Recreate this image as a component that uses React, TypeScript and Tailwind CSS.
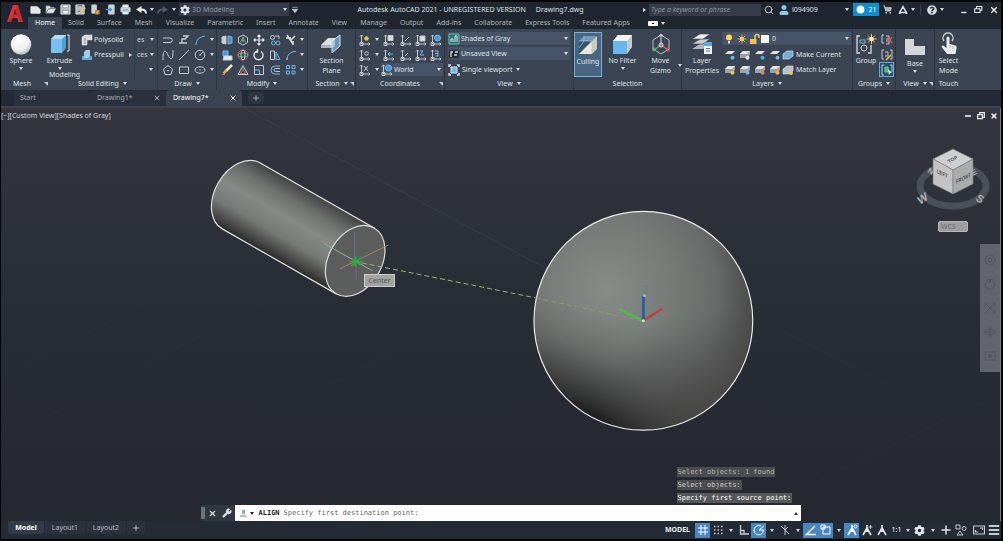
import React from "react";
import { Search, ShoppingCart, X, Minus, Plus, Menu, Wrench, Clock3 } from "lucide-react";
import { FaCog, FaQuestionCircle, FaUser } from "react-icons/fa";

type Kids = { children?: React.ReactNode };

function Ico({ children, className = "h-3 w-3" }: Kids & { className?: string }) {
  return (
    <svg viewBox="0 0 12 12" className={`${className} shrink-0`} fill="none" stroke="#c3cad3" strokeWidth="1" aria-hidden="true">
      {children}
    </svg>
  );
}

function Caret({ className = "w-2" }: { className?: string }) {
  return (
    <span className={`flex shrink-0 items-center justify-center ${className}`}>
      <svg viewBox="0 0 4 3" className="h-[3px] w-1 shrink-0" aria-hidden="true">
        <path d="M0 0h4L2 3z" fill="#d5dae0" />
      </svg>
    </span>
  );
}

function Tool({ label, children, className = "h-[15px] w-[15px]" }: Kids & { label: string; className?: string }) {
  return (
    <button type="button" aria-label={label} title={label} className={`flex shrink-0 items-center justify-center ${className}`}>
      {children}
    </button>
  );
}

function Big({ label, lines, children, caret, className = "" }: Kids & { label: string; lines: string[]; caret?: boolean; className?: string }) {
  return (
    <button type="button" aria-label={label} className={`flex shrink-0 flex-col items-center ${className}`}>
      <span className="flex h-6 items-center justify-center">{children}</span>
      {lines.map((l) => (
        <span key={l} className="h-[10px] whitespace-nowrap leading-[10px]">{l}</span>
      ))}
      {caret && <Caret className="h-1 w-2" />}
    </button>
  );
}

function Panel({ title, children, className, arrow, corner }: Kids & { title: string; className: string; arrow?: boolean; corner?: boolean }) {
  return (
    <section className={`flex shrink-0 flex-col border-r border-[#2c3440] pt-[3px] ${className}`}>
      <div className="flex h-[45px]">{children}</div>
      <footer className="relative flex h-[13px] items-center justify-center leading-[13px]">
        {title}
        {arrow && <Caret className="ml-1 w-1" />}
        {corner && <Corner />}
      </footer>
    </section>
  );
}

function Corner() {
  return (
    <svg viewBox="0 0 4 4" className="absolute right-px top-[5px] h-1 w-1" aria-hidden="true">
      <path d="M0 0h4v4z" fill="#c3cad3" />
    </svg>
  );
}

const blue = "#72b8ea";

function DrawIcons() {
  const rows: [string, React.ReactNode][][] = [
    [
      ["Polyline", <path d="M1 4h7a2 2 0 0 1 0 4.500H1" />],
      ["3D Polyline", <path d="M5 2h5L7 5H4v4H1h8" strokeWidth="1.400" />],
      ["Arc", <path d="M2 11C2 6 5 3 11 2" stroke={blue} />],
    ],
    [
      ["Spline", <path d="M1 11V9C1 0 4 1 6 6S11 12 11 3V1" />],
      ["Line", <path d="M1 11 11 1" />],
      ["Circle", <><circle cx="6" cy="6" r="4.800" /><path d="M6 6l3-3M5 6h2" /></>],
    ],
    [
      ["Polygon", <><path d="m6 1.500 4.500 3.500L9 10.500H3L1.500 5z" /><path d="M5 6.500h2" stroke={blue} /></>],
      ["Rectangle", <path d="M1.500 3h9v6.500h-9z" />],
      ["Ellipse", <><ellipse cx="6" cy="6" rx="5" ry="3.200" /><path d="M5 6h2" stroke={blue} /></>],
    ],
  ];
  return (
    <div className="flex flex-col pl-[2px]">
      {rows.map((r, i) => (
        <div key={i} className="flex h-[15px] items-center">
          {r.map(([n, g]) => <Tool key={n} label={n} className="h-[15px] w-4"><Ico>{g}</Ico></Tool>)}
          <Caret />
        </div>
      ))}
    </div>
  );
}

function ModifyIcons() {
  const rows: [string, React.ReactNode][][] = [
    [
      ["3D Mirror", <><path d="M1 3l4-1v8l-4-1z" fill="#c9ced5" /><path d="M7 2l4 1v6l-4 1z" fill="#4c8fc0" stroke={blue} /></>],
      ["3D Move", <><path d="M6 1l4.500 2.500v5L6 11 1.500 8.500v-5zM6 6V3" /><path d="m6 6 3 2" stroke="#e0605a" /><path d="M6 6 3 8" stroke="#58b868" /><circle cx="6" cy="6" r="1.300" stroke="#58b868" /></>],
      ["Move", <path d="M6 1v10M1 6h10M4.500 2.500 6 1l1.500 1.500M4.500 9.500 6 11l1.500-1.500M2.500 4.500 1 6l1.500 1.500M9.500 4.500 11 6 9.500 7.500" stroke="#e8ecf0" strokeWidth="1.200" />],
      ["Copy", <><circle cx="3.500" cy="3.500" r="2" /><circle cx="4.500" cy="9" r="2" stroke={blue} /><circle cx="9" cy="9" r="2" stroke={blue} /><path d="M6 2h4v3" /></>],
      ["Trim", <path d="M2 1l6 9M10 2 5 7M1 4h5M8 7v4" strokeWidth="1.500" stroke="#dde2e7" />],
    ],
    [
      ["Align", <><path d="M2 2h5v5H2z" fill="#4c9bd3" stroke={blue} /><path d="M3 7h8v4H2z" fill="#e6e9ec" /></>],
      ["3D Rotate", <><circle cx="6" cy="6" r="5" stroke="#e0605a" /><ellipse cx="6" cy="6" rx="5" ry="2" stroke="#58b868" /><ellipse cx="6" cy="6" rx="2" ry="5" stroke="#c3cad3" /></>],
      ["Rotate", <path d="M8 2.500A4.500 4.500 0 1 1 4 2M4.500 0v3H2" strokeWidth="1.300" stroke="#e8ecf0" />],
      ["Mirror", <><path d="M1.500 10.500V2h4v8.500z" /><path d="M7 10.500V3l4 7.500z" stroke={blue} /></>],
      ["Fillet", <><path d="M2 11C2 6 5 2.500 11 2.500" stroke={blue} /><path d="M2 11v-2" /></>],
    ],
    [
      ["Erase", <><path d="m11 1-6 6" stroke="#f4ead4" strokeWidth="2.500" /><path d="m5.500 6-3 3.500" stroke="#efb13e" strokeWidth="2.500" /><path d="M1 10.500h3" stroke="#e0605a" /></>],
      ["3D Scale", <><path d="M6 1.500 11 10.500H1z" /><path d="M6 5.500 8.500 9.500h-5z" stroke="#e0605a" /><path d="M6 2v4" stroke="#58b868" /></>],
      ["Scale", <><path d="M1.500 1.500h9v9h-9z" /><path d="M1.500 6h5v4.500" stroke={blue} /></>],
      ["Offset", <><path d="M11 2H6a4 4 0 0 0 0 8h5" stroke={blue} /><path d="M11 4.500H6.500a1.500 1.500 0 0 0 0 3H11" /></>],
      ["Array", <path d="M1.500 1.500h3v3h-3zM7 1.500h3v3H7zM1.500 7h3v3h-3zM7 7h3v3H7z" stroke={blue} />],
    ],
  ];
  return (
    <div className="flex flex-col pl-[2px]">
      {rows.map((r, i) => (
        <div key={i} className="flex h-[15px] items-center">
          {r.map(([n, g]) => <Tool key={n} label={n} className="h-[15px] w-4"><Ico>{g}</Ico></Tool>)}
          <Caret className="w-[5px]" />
        </div>
      ))}
    </div>
  );
}

function Ucs({ children }: Kids) {
  return (
    <Ico>
      <path d="M2.500 1v9h8M1 2.500 2.500 1 4 2.500M9.500 8.500 11 10 9.500 11.500M1 8.500h3v3H1z" />
      {children}
    </Ico>
  );
}

function Field({ label, icon, value, options, className }: { label: string; icon: React.ReactNode; value: string; options: string[]; className: string }) {
  return (
    <label className={`relative flex h-[13px] items-center bg-[#475366] ${className}`}>
      {icon}
      <select aria-label={label} defaultValue={value} className="h-[13px] min-w-0 flex-1 appearance-none bg-transparent pl-px leading-[13px] outline-none">
        {options.map((o) => <option key={o}>{o}</option>)}
      </select>
      <Caret />
    </label>
  );
}

function CoordinateIcons() {
  const first = ["UCS Icon", "UCS Icon Properties"];
  return (
    <div className="flex flex-1 flex-col pl-px">
      {[0, 1].map((r) => (
        <div key={r} className="flex h-[15px] items-center">
          <Tool label={first[r]}><Ucs><circle cx="7.500" cy="4.500" r="1.800" fill={r ? "none" : "#f0c74c"} stroke={r ? "#c3cad3" : "#f0c74c"} /></Ucs></Tool>
          <Caret className="w-[9px]" />
          <Tool label={r ? "UCS Previous" : "Named UCS"}><Ucs>{r ? <path d="M10 5H5M7 3 5 5l2 2" stroke={blue} /> : <path d="M5 1.500h5v5H5zM6 4h3" fill="#dde2e7" />}</Ucs></Tool>
          <span className="w-[2px]" />
          <Tool label={r ? "Z-Axis Vector" : "Origin"}><Ucs><path d={r ? "M5 7l3-3" : "M5 7l4-4"} /></Ucs></Tool>
          <Tool label={r ? "Rotate Z" : "View UCS"}><Ucs>{r ? <path d="M5 2h3L5 6h4" stroke={blue} /> : <path d="M5 2h5v5H5z" fill="#dde2e7" />}</Ucs></Tool>
          <Tool label={r ? "3 Point UCS" : "World UCS"}><Ucs>{r ? <path d="M5 2h3v5H5M5 4.500h3" stroke={blue} /> : <circle cx="7.500" cy="4" r="3" fill="#4c9bd3" stroke={blue} />}</Ucs></Tool>
        </div>
      ))}
      <div className="flex h-[15px] items-center">
        <Tool label="X axis"><Ucs><path d="M5 2l4 5M9 2 5 7" /></Ucs></Tool>
        <Caret className="w-[9px]" />
        <Field label="Coordinate system" value="World" options={["World", "Top", "Front"]} className="mr-px flex-1"
          icon={<Ucs><circle cx="7.500" cy="4" r="3" fill="#4c9bd3" stroke={blue} /></Ucs>} />
      </div>
    </div>
  );
}

const layerMarks = ["#58c7d8", "#dde2e7", "#45b7d6", "#72b8ea"];
const layerMarks2 = ["#f0c74c", "#72b8ea", "#e08a3a", "#f0b13e"];

function LayerIcon({ mark, thick }: { mark: string; thick?: boolean }) {
  return (
    <Ico>
      <path d={thick ? "M1 5 4 2h7v4L8 9H1z" : "M1 5 4 2h7L8 5z"} fill={thick ? "#9aa1aa" : "#dde1e5"} stroke="none" />
      {thick && <path d="M1 5 4 2h7L8 5z" fill="#e2e5e8" stroke="none" />}
      <circle cx="8.500" cy="8.800" r="2" fill={mark} stroke="none" />
    </Ico>
  );
}

function LayerRows() {
  return (
    <div className="flex flex-1 flex-col pr-px">
      <label className="mb-[2px] flex h-[13px] items-center bg-[#475366] pl-[2px]">
        <Ico><circle cx="5" cy="4.500" r="3" fill="#ffd75e" stroke="none" /><path d="M4 8h2v2.500H4z" fill="#dedfd8" stroke="none" /></Ico>
        <Ico><circle cx="6" cy="6" r="2.200" fill="#ffd35a" stroke="none" /><path d="M6 1.500v9M1.500 6h9M2.800 2.800l6.400 6.400M9.200 2.800 2.800 9.200" stroke="#f2c54f" strokeWidth=".8" /></Ico>
        <Ico><path d="M2 6h6.500v5H2z" fill="#f5c14c" stroke="none" /><path d="M7 6V3.500a2 2 0 0 1 4 0V5" stroke="#f2d184" strokeWidth="1.400" /></Ico>
        <span className="ml-px h-[8px] w-[8px] bg-[#fafafa]" />
        <select aria-label="Layer" className="min-w-0 flex-1 appearance-none bg-transparent pl-[3px] leading-[13px] outline-none"><option>0</option></select>
        <Caret />
      </label>
      {[0, 1].map((r) => (
        <div key={r} className="flex h-[15px] items-center">
          {(r ? layerMarks2 : layerMarks).map((m, i) => (
            <Tool key={m} label={`Layer tool ${r * 4 + i + 1}`}><LayerIcon mark={m} thick={r === 1 || i === 1} /></Tool>
          ))}
          <button type="button" className="flex items-center gap-[2px] whitespace-nowrap">
            <Ico>
              <path d="M1 5 5 2h6v5L7 10H1z" fill={r ? "#b8bec5" : "#70aed0"} stroke="#d4dce3" strokeWidth=".7" />
              {r === 1 && <circle cx="9" cy="9" r="2" fill="#f0c74c" stroke="none" />}
            </Ico>
            {r ? "Match Layer" : "Make Current"}
          </button>
        </div>
      ))}
    </div>
  );
}

function QuickAccess() {
  const items: [string, React.ReactNode][] = [
    ["New", <path d="M1 3h7l3 3v4H1z" fill="#e5e7e9" stroke="#f1f1f1" />],
    ["Open", <path d="M1 10V2h4l1 1.500h4V5H4z M4 5h8l-3 5H1z" fill="#e2e4e6" stroke="#6b7078" strokeWidth=".6" />],
    ["Save", <><path d="M1 1h10v10H1z" fill="#b9bec4" stroke="#d8dadd" /><path d="M3 1h6v3H3zM3 7h6v4H3z" fill="#f3f3f3" stroke="#71777f" strokeWidth=".6" /></>],
    ["Save As", <><path d="M1 1h9v10H1z" fill="#b9bec4" stroke="#d8dadd" /><path d="M3 2h5M3 8h5" stroke="#60666e" /><path d="m6 9 5-5" stroke="#eac46a" strokeWidth="2" /></>],
    ["Open from Mobile", <><path d="M2 1h5v9H2z" fill="#d0d3d6" /><path d="M6 7h4v4H6z" fill="#e39d43" stroke="#c87830" /></>],
    ["Save to Mobile", <><path d="M4 1h6v10H4z" fill="#cfd6da" /><path d="M1 6h6M5 4l2 2-2 2" stroke="#309bd4" strokeWidth="1.400" /></>],
    ["Plot", <><path d="M3 1h6v3H3zM3 8h6v3H3z" fill="#fff" /><path d="M1 4h10v4.500H1z" fill="#c7d6df" /><path d="M3 6.500h6" stroke="#3b9ad0" /></>],
  ];
  return (
    <>
      {items.map(([n, g]) => <Tool key={n} label={n}><Ico className="h-[11px] w-[11px]">{g}</Ico></Tool>)}
      <Tool label="Undo"><Ico><path d="M11 9.500c0-2.500-2-4-5-4" stroke="#e9ebee" strokeWidth="1.800" /><path d="M6.500 2v7L1 5.500z" fill="#e9ebee" stroke="none" /></Ico></Tool>
      <Caret className="w-[7px]" />
      <Tool label="Redo"><Ico><path d="M1 9.500c0-2.500 2-4 5-4" stroke="#525963" strokeWidth="1.800" /><path d="M5.500 2v7L11 5.500z" fill="#525963" stroke="none" /></Ico></Tool>
      <Caret className="w-[7px]" />
    </>
  );
}

const ribbonTabs = ["Solid", "Surface", "Mesh", "Visualize", "Parametric", "Insert", "Annotate", "View", "Manage", "Output", "Add-ins", "Collaborate", "Express Tools", "Featured Apps"];

function Header() {
  return (
    <header className="flex bg-[#20262f]">
      <button type="button" aria-label="Application menu" className="flex w-[27px] shrink-0 justify-center pt-[2px]">
        <svg viewBox="0 0 18 20" className="h-5 w-[18px]" aria-hidden="true">
          <path d="M1 18 7 1h5l5 17h-4.500l-1-4H6.500L5 18zM7.500 10.500h3L9.200 5z" fill="#d93636" fillRule="evenodd" />
          <path d="m1 18 4-3.500L12 1l5 17-4.500-2.500-1-4-5 2.500L5 18z" fill="#a82028" opacity=".45" />
        </svg>
      </button>
      <div className="min-w-0 flex-1">
        <div className="flex h-[15px] items-center">
          <QuickAccess />
          <label className="ml-[2px] flex h-[13px] w-[110px] shrink-0 items-center bg-[#343c49] pl-px text-[#9299a4]">
            <FaCog className="h-[10px] w-[10px] text-[#e2e5e9]" />
            <select aria-label="Workspace" className="min-w-0 flex-1 appearance-none bg-transparent pl-[2px] outline-none"><option>3D Modeling</option></select>
            <Caret />
          </label>
          <Tool label="Customize quick access" className="w-3"><Ico className="h-2 w-2"><path d="M2 2h8M2 5h8l-4 5z" fill="#c9ced5" /></Ico></Tool>
          <h1 className="flex min-w-0 flex-1 justify-center gap-[10px] whitespace-nowrap text-[#dde1e6]">
            <span>Autodesk AutoCAD 2021 - UNREGISTERED VERSION</span>
            <span>Drawing7.dwg</span>
          </h1>
          <Tool label="Collapse search" className="w-[9px]"><svg viewBox="0 0 3 4" className="h-1 w-[3px]" aria-hidden="true"><path d="M0 0l3 2-3 2z" fill="#e5e5e5" /></svg></Tool>
          <input aria-label="Search help" placeholder="Type a keyword or phrase" className="h-[12px] w-[112px] bg-[#343c49] px-[2px] italic outline-none placeholder:text-[#8d94a0]" />
          <Tool label="Search"><Search className="h-[10px] w-[10px]" /></Tool>
          <button type="button" className="flex w-[67px] shrink-0 items-center">
            <FaUser className="mx-[3px] h-[10px] w-[10px] text-[#8fc4ec]" />
            l094909
          </button>
          <Caret />
          <button type="button" className="ml-[2px] flex h-[13px] w-[26px] shrink-0 items-center justify-center gap-[2px] bg-[#0f8dd0] text-white">
            <Clock3 className="h-[11px] w-[11px] fill-white text-[#0f8dd0]" strokeWidth={3} />21
          </button>
          <Tool label="App store" className="w-[17px]"><ShoppingCart className="h-[9px] w-[9px] fill-[#aab0b8]" /></Tool>
          <Tool label="Autodesk account" className="w-[13px]"><Ico className="h-[10px] w-[10px]"><path d="M6 2 2 9h8zM6 1v2M1 10h2M9 10h2" strokeWidth="1.800" stroke="#dfe3e7" /></Ico></Tool>
          <Caret className="w-[7px]" />
          <span className="mx-[4px] h-[11px] w-px bg-[#3b434e]" />
          <Tool label="Help" className="w-[13px]"><FaQuestionCircle className="h-[10px] w-[10px] text-[#d5d9dd]" /></Tool>
          <Caret />
          <Tool label="Minimize" className="ml-[10px] w-[15px]"><Ico className="h-[9px] w-[9px]"><path d="M3 10h7" strokeWidth="1.800" stroke="#eee" /></Ico></Tool>
          <Tool label="Restore"><Ico className="h-[9px] w-[9px]"><path d="M1 5h7v5H1zM3.500 5V2h7v5H8" strokeWidth="1.400" stroke="#eee" /></Ico></Tool>
          <Tool label="Close"><X className="h-[10px] w-[10px] text-white" strokeWidth={3} /></Tool>
        </div>
        <nav className="flex h-3 items-center leading-3 text-[#aeb5bf]">
          <a href="#home" className="flex h-3 w-[34px] shrink-0 items-center justify-center rounded-t-[2px] bg-[#3b4453] text-white">Home</a>
          {ribbonTabs.map((t) => (
            <a key={t} href={`#${t}`} className="shrink-0 whitespace-nowrap pl-[6px] pr-[7px]">{t}</a>
          ))}
          <Tool label="Ribbon display" className="ml-[8px] h-3 w-4"><span className="flex h-[5px] w-[10px] items-center justify-center rounded-[1px] bg-white"><span className="h-px w-[2px] bg-black" /></span></Tool>
          <Caret className="w-1" />
        </nav>
      </div>
    </header>
  );
}

function ModelingPanels() {
  return (
    <section className="flex w-[157px] shrink-0 flex-col border-r border-[#2c3440]">
      <div className="flex h-[50px] pt-[3px]">
        <Big label="Sphere" lines={["Sphere"]} caret className="w-10">
          <svg viewBox="0 0 22 22" className="h-[22px] w-[22px]" aria-hidden="true">
            <defs><radialGradient id="ball" cx=".4" cy=".3" r=".7"><stop offset="0" stopColor="#fff" /><stop offset=".7" stopColor="#eceded" /><stop offset="1" stopColor="#b9bbbd" /></radialGradient></defs>
            <circle cx="11" cy="11.500" r="10.300" fill="url(#ball)" />
          </svg>
        </Big>
        <div className="flex flex-1 flex-col border-r border-[#323b48]">
          <div className="flex h-[39px]">
            <Big label="Extrude" lines={["Extrude"]} caret className="w-[37px]">
              <svg viewBox="0 0 22 22" className="h-[22px] w-[22px]" aria-hidden="true">
                <path d="M2 6 6 2h11v13l-4 5H2z" fill="#4f9fdb" /><path d="M2 6h11v14H2z" fill="#79c0f2" /><path d="m2 6 4-4h11l-4 4z" fill="#b6dcf6" />
                <path d="M18 2h2v16h-2" fill="none" stroke="#e7e7e7" />
              </svg>
            </Big>
            <div className="flex flex-col pl-[3px]">
              <button type="button" className="flex h-[15px] items-center gap-px">
                <Ico><path d="M1 11V3l3-2h7v5H6v5z" fill="#d6d9dc" stroke="#eee" strokeWidth=".5" /><path d="M4 4v6" stroke="#8f969e" /></Ico>
                Polysolid
              </button>
              <button type="button" className="flex h-[15px] items-center gap-px whitespace-nowrap">
                <Ico><path d="M1 7h10v4H1z" fill="#5da8dc" stroke="none" /><path d="M3 3l2-2h4v6l-2 2H3z" fill="#a5cbe6" stroke="none" /></Ico>
                Presspull
                <svg viewBox="0 0 3 4" className="ml-1 h-1 w-[3px]" aria-hidden="true"><path d="M0 0l3 2-3 2z" fill="#e5e5e5" /></svg>
              </button>
            </div>
          </div>
          <span className="pl-2 leading-[9px]">Modeling</span>
        </div>
        <div className="w-[22px] pl-[2px] text-[#ccd2d9]">
          {["es", "ces", ""].map((t) => (
            <div key={t} className="flex h-[15px] items-center">
              <span className="w-3 text-left">{t}</span>
              <Caret className={t ? "w-[6px]" : "w-1"} />
            </div>
          ))}
        </div>
      </div>
      <div className="flex h-[9px] leading-[9px]">
        <span className="flex w-[50px] items-center justify-between pl-3 pr-[3px]">Mesh<svg viewBox="0 0 4 4" className="h-1 w-1" aria-hidden="true"><path d="M0 0h4v4z" fill="#c3cad3" /></svg></span>
        <span className="flex items-center pl-[27px]">Solid Editing<Caret className="ml-1 w-1" /></span>
      </div>
    </section>
  );
}

function Ribbon() {
  return (
    <div className="flex h-[61px] bg-[#3b4453] text-[#dfe3e8]">
      <ModelingPanels />
      <Panel title="Draw" arrow className="w-[59px]"><DrawIcons /></Panel>
      <Panel title="Modify" arrow className="w-[91px]"><ModifyIcons /></Panel>
      <Panel title="Section" arrow corner className="w-[48px]">
        <Big label="Section Plane" lines={["Section", "Plane"]} className="w-full">
          <svg viewBox="0 0 24 22" className="h-[22px] w-6" aria-hidden="true">
            <path d="M1 12 8 5h7v9H1z" fill="#dcdfe2" /><path d="M1 12h12v3H1z" fill="#aeb4bb" />
            <path d="M12 8 20 2v11l-8 7z" fill="#7fbbe2" fillOpacity=".7" stroke="#d7e8f4" />
          </svg>
        </Big>
      </Panel>
      <Panel title="Coordinates" corner className="w-[89px]"><CoordinateIcons /></Panel>
      <Panel title="View" arrow className="w-[129px]">
        <div className="flex flex-1 flex-col gap-[2px] px-[3px]">
          <Field label="Visual style" value="Shades of Gray" options={["Shades of Gray", "Wireframe", "Realistic"]} className=""
            icon={<Ico><path d="M1 1h10v10H1z" fill="#2d6f71" stroke="#63bdb9" /><path d="M3 9V6h2v3M7 9V3h2v6" stroke="#d8eeee" /></Ico>} />
          <Field label="Named view" value="Unsaved View" options={["Unsaved View", "Top", "Front"]} className=""
            icon={<Ico><path d="M1 2h10v8H1z" fill="#20262f" stroke="#39424f" /><path d="M3 9V4h2M7 4h3M6 7h3" stroke="#dadde0" strokeWidth="1.300" /></Ico>} />
          <button type="button" className="flex h-[15px] items-center gap-[2px]">
            <Ico><path d="M3 3h6v6H3z" fill="#72b8ea" stroke="#dde2e7" /><path d="M1 3V1h2M9 1h2v2M11 9v2H9M3 11H1V9" stroke="#dde2e7" strokeWidth="1.400" /></Ico>
            Single viewport <Caret className="w-2" />
          </button>
        </div>
      </Panel>
      <Panel title="Selection" className="w-[108px]">
        <Big label="Culling" lines={["Culling"]} className="h-[45px] w-7 border border-[#6eb3de] bg-[#4a6580]">
          <svg viewBox="0 0 22 22" className="h-[22px] w-[22px]" aria-hidden="true">
            <path d="M2 7 7 2h13v13l-5 5H2z" fill="#35546e" /><path d="M2 7 7 2h13l-5 5z" fill="#6f9ab8" /><path d="M15 7 2 20h13z" fill="#eee7d6" /><path d="M15 7v13l5-5V2z" fill="#cfc9bb" /><path d="M2 7h13V20M7 2v5L2 14" stroke="#9ec4dc" fill="none" strokeWidth=".7" />
          </svg>
        </Big>
        <Big label="No Filter" lines={["No Filter"]} caret className="w-[41px]">
          <svg viewBox="0 0 22 22" className="h-[22px] w-[22px]" aria-hidden="true">
            <path d="M1 8 6 2h14v12l-5 7H1z" fill="#c5c8cc" /><path d="m1 8 5-6h14l-5 6z" fill="#f4f4f4" /><path d="M1 8h14v13H1z" fill="#68b5ef" />
          </svg>
        </Big>
        <Big label="Move Gizmo" lines={["Move", "Gizmo"]} className="w-[35px]">
          <svg viewBox="0 0 22 22" className="h-[22px] w-[22px]" fill="none" aria-hidden="true">
            <path d="m11 2 8 5v9l-8 5-8-5V7z" stroke="#b6bdc6" /><path d="M11 2v10M8 4l3-3 3 3" stroke="#d9dfe5" />
            <path d="m11 12-7 5" stroke="#58b868" strokeWidth="1.500" /><path d="m11 12 7 5" stroke="#d85e62" strokeWidth="1.500" /><circle cx="11" cy="12" r="2" stroke="#e9ecef" />
            <circle cx="4" cy="16.500" r="1.500" stroke="#58b868" /><circle cx="18" cy="16.500" r="1.500" stroke="#d85e62" />
          </svg>
        </Big>
        <Caret className="mt-[29px] h-2 w-[3px]" />
      </Panel>
      <Panel title="Layers" arrow className="w-[171px]">
        <Big label="Layer Properties" lines={["Layer", "Properties"]} className="w-[40px]">
          <svg viewBox="0 0 22 22" className="h-[22px] w-[22px]" aria-hidden="true">
            <path d="m1 16 8-5h10l-7 5z" fill="#b1b7be" /><path d="m1 11 8-5h10l-7 5z" fill="#c9cdd2" stroke="#3b4453" strokeWidth=".6" /><path d="m1 6 8-5h10l-7 5z" fill="#eceef0" stroke="#3b4453" strokeWidth=".6" />
            <path d="M13 9h8v12h-8z" fill="#f2f4f6" /><path d="M13 9h8v4h-8z" fill="#5aa9dd" /><path d="M15 15.500h4M15 18h4" stroke="#5e7f9b" />
          </svg>
        </Big>
        <LayerRows />
      </Panel>
      <Panel title="Groups" arrow className="w-[43px]">
        <Big label="Group" lines={["Group"]} className="w-[26px]">
          <svg viewBox="0 0 22 22" className="h-[22px] w-[22px]" fill="none" stroke="#d5dae0" aria-hidden="true">
            <path d="M5 3H2v17h3M13 20h3v-8" strokeWidth="1.300" /><path d="M5 7h5v3H5z" stroke="#72b8ea" /><circle cx="9" cy="15" r="3" />
            <path d="M16.500 1v10M11.500 6h10M13 2.500l7 7M20 2.500l-7 7" stroke="#f5c66a" /><circle cx="16.500" cy="6" r="2.300" fill="#fff0bd" stroke="none" />
          </svg>
        </Big>
        <div className="flex flex-col">
          <Tool label="Ungroup"><Ico><path d="M1 1h2M1 1v8h2M5 2h3v3H5M5 7h3v3H5" /><path d="m7 3 4 6M11 3 7 9" stroke="#e15e65" strokeWidth="1.300" /></Ico></Tool>
          <Tool label="Group Edit"><Ico><path d="M3 1H1v9h2M9 1h2v9H9M4 3h3v4H4" /><path d="m10 6-5 5" stroke="#f0bd56" strokeWidth="1.600" /></Ico></Tool>
          <Tool label="Group Selection" className="h-[15px] w-[15px] border border-[#63addd] bg-[#27506f]"><Ico><path d="M3 1H1v10h2M9 1h2v7" /><path d="M4 3h3v5H4z" fill="#4fb36d" stroke="#62cf84" /><path d="m7 5 4 4H9l-1 2z" fill="#fff" stroke="none" /></Ico></Tool>
        </div>
      </Panel>
      <Panel title="View" arrow corner className="w-[39px]">
        <Big label="Base" lines={["Base"]} caret className="w-full pt-[3px]">
          <svg viewBox="0 0 22 18" className="h-[18px] w-[22px]" aria-hidden="true"><path d="M1 1h9v7h11v9H1z" fill="#d4d6d8" /></svg>
        </Big>
      </Panel>
      <Panel title="Touch" className="w-[27px] border-r-0">
        <Big label="Select Mode" lines={["Select", "Mode"]} className="w-full">
          <svg viewBox="0 0 22 24" className="h-6 w-[22px]" aria-hidden="true">
            <path d="M6 9a5 5 0 1 1 8 0" fill="none" stroke="#d7dadd" strokeWidth="1.300" />
            <path d="M8.500 6a1.500 1.500 0 0 1 3 0v6l6 1.500c1 .5 1.300 1.500 1 3L17.500 22H9l-5-6.500c-.8-1.500.5-2.500 2-1.500l2.500 2z" fill="#e9e9e9" />
            <path d="M12 13v3M15 14v3" stroke="#9ca1a7" strokeWidth=".7" />
          </svg>
        </Big>
      </Panel>
    </div>
  );
}

function FileTabs() {
  return (
    <div className="flex h-4 items-center bg-[#232a35] pl-[13px] leading-4 text-[#a7aeb8]">
      <a href="#start" className="h-4 w-[76px] rounded-t bg-[#29313c] pl-[6px]">Start</a>
      <div className="flex h-4 w-[76px] items-center justify-between rounded-t bg-[#29313c] pl-[7px] pr-[5px]">
        <a href="#drawing1">Drawing1*</a>
        <button type="button" aria-label="Close Drawing1"><X className="h-2 w-2" strokeWidth={3} /></button>
      </div>
      <div className="flex h-4 w-[76px] items-center justify-between rounded-t bg-[#3a4350] pl-[7px] pr-[5px] text-white">
        <a href="#drawing7">Drawing7*</a>
        <button type="button" aria-label="Close Drawing7"><X className="h-2 w-2" strokeWidth={3} /></button>
      </div>
      <button type="button" aria-label="New drawing" className="ml-[6px] flex h-3 w-4 items-center justify-center rounded-sm bg-[#2d3541]"><Plus className="h-2 w-2" strokeWidth={3} /></button>
    </div>
  );
}

function Scene() {
  return (
    <svg viewBox="0 108 1000 413" preserveAspectRatio="xMidYMin meet" className="absolute inset-0 h-full w-full" aria-label="Cylinder and sphere">
      <defs>
        <linearGradient id="tube" gradientUnits="userSpaceOnUse" x1="259.500" y1="163" x2="221.500" y2="229">
          <stop offset="0" stopColor="#434545" /><stop offset=".22" stopColor="#6e726f" /><stop offset=".45" stopColor="#858a85" /><stop offset=".7" stopColor="#767a76" /><stop offset=".88" stopColor="#4a4b4a" /><stop offset="1" stopColor="#272827" />
        </linearGradient>
        <radialGradient id="orb" cx=".33" cy=".36" r=".74">
          <stop offset="0" stopColor="#868b86" /><stop offset=".4" stopColor="#777c79" /><stop offset=".68" stopColor="#686b69" /><stop offset=".88" stopColor="#4e4f4e" /><stop offset="1" stopColor="#404040" />
        </radialGradient>
        <linearGradient id="shade" gradientUnits="userSpaceOnUse" x1="600" y1="432" x2="640" y2="330">
          <stop offset="0" stopColor="#0c0c0c" stopOpacity=".95" /><stop offset=".3" stopColor="#1c1c1c" stopOpacity=".6" /><stop offset=".65" stopColor="#333" stopOpacity=".22" /><stop offset="1" stopColor="#444" stopOpacity="0" />
        </linearGradient>
        <radialGradient id="rim" cx=".78" cy=".95" r=".5">
          <stop offset="0" stopColor="#4c4c4b" stopOpacity=".85" /><stop offset="1" stopColor="#555" stopOpacity="0" />
        </radialGradient>
      </defs>
      <g stroke="#353b43" strokeWidth=".6" opacity=".4">
        <path d="M1 378 150 300M40 420 260 304M640 160l220-52M780 330l120 62M820 480l180-86M300 400l90-46" />
      </g>
      <path d="M243 108 545 268" stroke="#38443d" strokeWidth=".8" />
      <path d="M259.500 163A26.500 38 30 0 0 221.500 229L335.500 294 373.500 228Z" fill="url(#tube)" stroke="#e2e4e2" strokeWidth="1.200" />
      <ellipse cx="354.500" cy="261" rx="26.500" ry="38" transform="rotate(30 354.500 261)" fill="#5c5d5d" stroke="#dcdedc" strokeWidth="1.200" />
      <path d="M354 262V232M355 262l1 18" stroke="#6c67a0" />
      <path d="m324 244 48 27" stroke="#8bb48d" />
      <path d="m339 269 49-24" stroke="#a9826d" />
      <path d="m351 259 9 6M360 258l-9 8M355 257v10M350 262h11" stroke="#2fae3c" strokeWidth="1.600" />
      <circle cx="643" cy="321" r="109.500" fill="url(#orb)" />
      <circle cx="643" cy="321" r="109.500" fill="url(#shade)" />
      <circle cx="643" cy="321" r="109.500" fill="url(#rim)" stroke="#e8e9e8" strokeWidth="1.200" />
      <path d="M361 263 535 298" stroke="#aaa984" strokeDasharray="5 3" />
      <path d="M535 298 642 321" stroke="#9b9665" strokeDasharray="5 3" />
      <path d="m642 321-23-12" stroke="#4cba4c" strokeWidth="2.500" />
      <path d="m643 321 19-12" stroke="#bd4149" strokeWidth="2.500" />
      <path d="M643 320v-24" stroke="#315b9e" strokeWidth="3" />
      <path d="M644 286h4l-4 4h4" stroke="#6675a5" strokeWidth=".7" fill="none" />
      <circle cx="643" cy="321" r="1.500" fill="#d7dadc" /><circle cx="644" cy="296" r="1.300" fill="#a8c6e2" />
    </svg>
  );
}

function ViewCube() {
  return (
    <svg viewBox="0 0 76 66" className="h-[66px] w-[76px]" role="img" aria-label="View cube" fontFamily="Liberation Sans, sans-serif" fontWeight="bold">
      <ellipse cx="38" cy="40" rx="33" ry="20" fill="none" stroke="#4b5058" strokeWidth="7" />
      <g fill="#aeb1b5" fontSize="11">
        <text transform="translate(5 59) rotate(-35) skewX(-10)">W</text>
        <text transform="translate(60 54) rotate(32)">S</text>
        <text fontSize="8" transform="translate(12 26) rotate(30)">N</text>
        <text fontSize="8" transform="translate(58 30) rotate(-30)">E</text>
      </g>
      <path d="m38 3 20 10-20 11-20-11z" fill="#cdcfd0" stroke="#777b80" strokeWidth=".6" />
      <path d="m18 13 20 11v24L18 38z" fill="#c1c3c4" stroke="#777b80" strokeWidth=".6" />
      <path d="m58 13-20 11v24l20-10z" fill="#a9abac" stroke="#777b80" strokeWidth=".6" />
      <g fill="#4e5256" fontSize="6">
        <text transform="matrix(.75 -.4 .5 .6 34 17)">TOP</text>
        <text fontSize="5" transform="matrix(.85 .42 0 1.2 22 27)">LEFT</text>
        <text fontSize="5" transform="matrix(.85 -.42 0 1.200 41 38)">FRONT</text>
      </g>
    </svg>
  );
}

function NavBar() {
  const items: [string, React.ReactNode][] = [
    ["Steering wheel", <><circle cx="6" cy="6" r="5" /><circle cx="6" cy="6" r="2" /></>],
    ["Pan", <path d="M3 11 1 6l2-1V2l2-1 1 4 1-4 2 1v3l2 1-1 5z" />],
    ["Zoom extents", <path d="m1 1 10 10M11 1 1 11M1 4V1h3M8 1h3v3M11 8v3H8" />],
    ["Orbit", <><path d="M6 1v10M1 6h10" /><ellipse cx="6" cy="6" rx="5" ry="3" /></>],
    ["Show motion", <><path d="M1 2h10v8H1z" /><path d="m5 4 3 2-3 2z" fill="#555b63" /></>],
  ];
  return (
    <div className="flex h-32 w-5 flex-col items-center justify-around bg-[#62666c] pb-1 pt-1">
      {items.map(([n, g]) => (
        <Tool key={n} label={n} className="h-5 w-5"><svg viewBox="0 0 12 12" className="h-3 w-3" fill="none" stroke="#50555d" aria-hidden="true">{g}</svg></Tool>
      ))}
    </div>
  );
}

function CommandLine() {
  return (
    <div className="relative mx-auto mt-auto w-[600px] max-w-full font-['DejaVu_Sans_Mono',monospace] text-[7px]">
      <div className="flex flex-col items-start pl-[476px] text-[#b4b6b8]">
        <span className="mb-[3px] h-[10px] whitespace-nowrap bg-[#4a4c4f] px-px leading-[10px]">Select objects: 1 found</span>
        <span className="mb-[3px] h-[10px] whitespace-nowrap bg-[#4a4c4f] px-px leading-[10px] text-[#cfd0d1]">Select objects:</span>
        <span className="mb-[2px] h-[10px] whitespace-nowrap bg-[#55575a] px-px leading-[10px] text-white">Specify first source point:</span>
      </div>
      <form className="flex h-4 items-center bg-[#303740]" onSubmit={(e) => e.preventDefault()}>
        <span className="h-3 w-1 bg-[#6d737b]" />
        <Tool label="Close command line"><X className="h-[9px] w-[9px] text-[#e5e7ea]" strokeWidth={3} /></Tool>
        <Tool label="Customize"><Wrench className="h-[10px] w-[10px] fill-[#dfe2e5] text-[#dfe2e5]" /></Tool>
        <div className="flex h-4 min-w-0 flex-1 items-center bg-white pl-1 text-[#666]">
          <Ico className="h-[9px] w-[9px]"><path d="M4 1h4v6H4z" fill="#7bb4c4" stroke="none" /><path d="M1 8h9v3H1z" fill="#b8bfc2" stroke="none" /></Ico>
          <svg viewBox="0 0 4 3" className="ml-[2px] mr-[5px] h-[3px] w-1" aria-hidden="true"><path d="M0 0h4L2 3z" fill="#222" /></svg>
          <label htmlFor="command" className="whitespace-nowrap"><span className="pr-1 font-bold text-[#222]">ALIGN</span>Specify first destination point:</label>
          <input id="command" className="min-w-0 flex-1 bg-transparent pl-1 outline-none" />
          <svg viewBox="0 0 4 3" className="mx-[3px] h-[3px] w-1" aria-hidden="true"><path d="M0 3h4L2 0z" fill="#333" /></svg>
        </div>
      </form>
    </div>
  );
}

function Viewport() {
  return (
    <main className="relative flex min-h-[413px] flex-1 flex-col overflow-hidden border-r border-[#777c83] bg-linear-to-b from-[#33363e] via-[#282c35] to-[#252831]">
      <Scene />
      <div className="relative flex h-4 items-center justify-between text-[#d7dadd]">
        <span>[−][Custom View][Shades of Gray]</span>
        <span className="flex">
          <Tool label="Minimize viewport" className="w-[13px]"><Minus className="h-2 w-2 text-white" strokeWidth={5} /></Tool>
          <Tool label="Maximize viewport" className="w-[13px]"><Ico className="h-2 w-2"><path d="M1 4h7v6H1zM4 4V1h7v7H8" stroke="#eee" strokeWidth="1.800" /></Ico></Tool>
          <Tool label="Close viewport" className="w-[13px]"><X className="h-2 w-2 text-white" strokeWidth={4} /></Tool>
        </span>
      </div>
      <span className="absolute left-[363px] top-[166px] flex h-[13px] w-[31px] items-center justify-center border border-[#ccc] bg-[#a2a3a3] text-[#555]">Center</span>
      <div className="absolute right-[9px] top-[38px] flex flex-col items-center">
        <ViewCube />
        <button type="button" className="mt-[9px] flex h-[11px] w-[30px] items-center rounded-[2px] border border-[#b4b6b9] bg-[#9b9da0] px-[2px] text-[#6b6f75]">WCS</button>
      </div>
      <div className="absolute right-0 top-[136px]"><NavBar /></div>
      <CommandLine />
    </main>
  );
}

function Toggle({ label, on, children }: Kids & { label: string; on?: boolean }) {
  return <Tool label={label} className={`h-[15px] w-[15px] ${on ? "bg-[#4a86c0]" : ""}`}><Ico>{children}</Ico></Tool>;
}

function StatusBar() {
  const person = "M6 1v3M6 4 2 11M6 4l4 7M3.500 8Q6 6 8.500 8";
  return (
    <footer className="flex h-[18px] items-center justify-between bg-[#222b36] text-[#b8bec7]">
      <nav className="flex h-[18px] items-start pl-[7px] leading-[13px]">
        <a href="#model" className="w-[36px] rounded-b bg-[#323c49] text-center font-bold text-white">Model</a>
        <a href="#layout1" className="ml-px w-10 rounded-b bg-[#29323e] text-center">Layout1</a>
        <a href="#layout2" className="ml-px w-10 rounded-b bg-[#29323e] text-center">Layout2</a>
        <button type="button" aria-label="New layout" className="ml-px flex h-[13px] w-[18px] items-center justify-center rounded-b bg-[#29323e]"><Plus className="h-2 w-2" strokeWidth={3} /></button>
      </nav>
      <div className="flex items-center">
        <button type="button" className="pr-[5px] font-bold text-[#eceef0]">MODEL</button>
        <Toggle label="Grid" on><path d="M4 1v10M8 1v10M1 4h10M1 8h10" stroke="#fff" /></Toggle>
        <Toggle label="Snap"><path d="M2 2.500h9M2 6h9M2 9.500h9" strokeDasharray="1.500 2" strokeWidth="1.500" /></Toggle>
        <Caret className="w-[11px]" />
        <Toggle label="Ortho"><path d="M2.500 1v9H11M2.500 6.500H6V10" strokeWidth="1.300" /></Toggle>
        <Toggle label="Polar tracking" on><path d="M10.500 6A4.700 4.700 0 1 1 8 2M6 6l5-4M6 6h5" stroke="#fff" /></Toggle>
        <Caret className="w-[11px]" />
        <Toggle label="Isometric drafting"><path d="m2 2 8 8M6 1v10M6 6l3-3" /></Toggle>
        <Caret className="w-[11px]" />
        <Toggle label="Object snap tracking" on><path d="M10 2 1.500 10.500H11" stroke="#fff" strokeWidth="1.300" /></Toggle>
        <Toggle label="Object snap" on><path d="M3 3h7v7H3zM1 1h4v4H1z" stroke="#fff" /></Toggle>
        <Caret className="w-[11px]" />
        <Toggle label="Annotation visibility" on><path d={person} stroke="#fff" strokeWidth="1.600" /><circle cx="9.500" cy="2.500" r="1.500" stroke="#fff" /></Toggle>
        <Toggle label="Auto scale"><path d={person} stroke="#e7e9ec" strokeWidth="1.600" /><path d="M9.500 1v4M7.500 3h4" /></Toggle>
        <Toggle label="Annotation scale"><path d={person} stroke="#e7e9ec" strokeWidth="1.600" /></Toggle>
        <button type="button" className="w-[15px] text-center text-white">1:1</button>
        <Caret />
        <Tool label="Workspace switching"><FaCog className="h-[11px] w-[11px] text-[#e5e7e9]" /></Tool>
        <Caret className="w-[11px]" />
        <Tool label="Annotation monitor"><Plus className="h-[14px] w-[14px] text-[#e5e7e9]" strokeWidth={2.5} /></Tool>
        <Toggle label="Isolate objects"><path d="M1 1h4v4H1z" /><circle cx="9" cy="4.500" r="2" /><path d="m5 7 3 4H2z" /></Toggle>
        <span className="w-[3px]" />
        <Toggle label="Clean screen"><path d="M.5 2h11v8H.500zM7 4h2.500v2M5 8H2.500V6" strokeWidth="1.200" /></Toggle>
        <Tool label="Customization"><Menu className="h-[14px] w-[14px] text-white" strokeWidth={2.5} /></Tool>
      </div>
    </footer>
  );
}

export default function App() {
  return (
    <div className="flex min-h-screen w-full flex-col overflow-hidden border-y-2 border-l border-r-2 border-[#050607] bg-[#222b36] font-['Noto_Sans',sans-serif] text-[7px] leading-[10px] text-[#dfe3e8]">
      <Header />
      <Ribbon />
      <FileTabs />
      <div className="h-[2px] bg-[#3a4350]" />
      <Viewport />
      <StatusBar />
    </div>
  );
}
